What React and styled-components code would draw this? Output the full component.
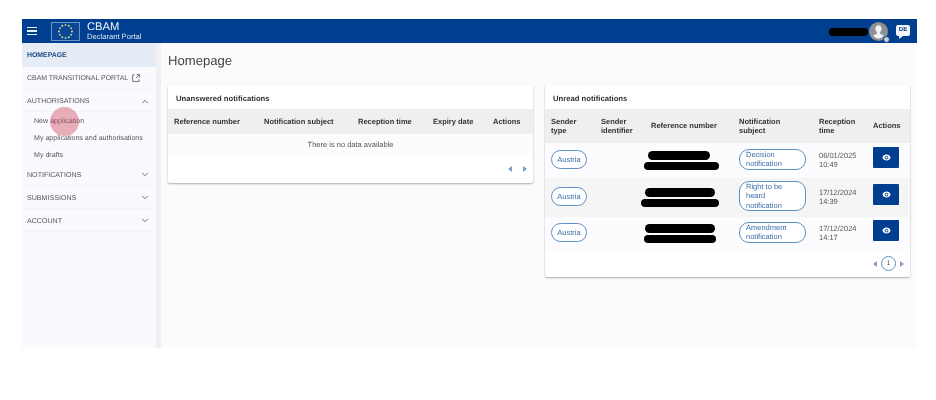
import React from 'react';
import styled, { createGlobalStyle } from 'styled-components';

const GlobalStyle = createGlobalStyle`
  html, body {
    margin: 0;
    padding: 0;
    background: #fff;
    font-family: "Liberation Sans", Arial, sans-serif;
    text-rendering: geometricPrecision;
  }
`;

const blue = '#003f8f';

// page frame
const Frame = styled.div`
  position: relative;
  width: 895px;
  height: 329px;
  margin: 19px 0 0 22px;
  display: flex;
  flex-direction: column;
  background: #fbfbfe;
  overflow: hidden;
  filter: blur(0.35px);
`;

const TopBar = styled.header`
  height: 24px;
  flex: none;
  background: ${blue};
  display: flex;
  align-items: center;
  padding: 0 7px 0 5px;
  color: #fff;
`;

const MenuButton = styled.div`
  width: 10px;
  height: 6px;
  border-top: 1.5px solid #e8eef8;
  border-bottom: 1.5px solid #e8eef8;
  position: relative;
  margin-right: 14px;
  &::after {
    content: '';
    position: absolute;
    left: 0;
    right: 0;
    top: 2.2px;
    height: 1.5px;
    background: #e8eef8;
  }
`;

const Brand = styled.div`
  display: flex;
  flex-direction: column;
  margin-left: 7px;
  margin-top: 1px;
  line-height: 1;
`;

const BrandName = styled.span`
  font-size: 11.2px;
  line-height: 11px;
  color: #f2f5fb;
`;

const BrandSub = styled.span`
  font-size: 7.6px;
  line-height: 8px;
  color: #dfe7f4;
`;

const TopRight = styled.div`
  margin-left: auto;
  display: flex;
  align-items: center;
`;

const HeaderBlot = styled.div`
  width: 39px;
  height: 8px;
  border-radius: 4px;
  background: #000;
  margin-top: 1px;
`;

const Avatar = styled.div`
  position: relative;
  width: 19px;
  height: 19px;
  margin-left: 1px;
  margin-right: 8px;
  svg { display: block; }
`;

const AvatarBadge = styled.span`
  position: absolute;
  right: -2px;
  bottom: -2px;
  width: 5px;
  height: 5px;
  border-radius: 50%;
  background: #c9ced8;
  border: 1px solid ${blue};
`;

const LangBubble = styled.div`
  position: relative;
  width: 14px;
  height: 11px;
  margin-top: -1px;
  background: #f4f7fc;
  border-radius: 2px;
  color: ${blue};
  font-size: 6px;
  font-weight: 700;
  line-height: 11px;
  text-align: center;
  &::after {
    content: '';
    position: absolute;
    left: 3px;
    bottom: -3px;
    border-top: 3px solid #f4f7fc;
    border-right: 4px solid transparent;
  }
`;

const Body = styled.div`
  flex: 1;
  display: flex;
  min-height: 0;
`;

// side menu
const Sidebar = styled.nav`
  width: 134px;
  flex: none;
  background: #fafafe;
  border-right: 5px solid #f0f0f4;
  color: #555;
  font-size: 7.1px;
`;

const HomeItem = styled.div`
  height: 24px;
  background: #e6ecf5;
  color: #1d4a86;
  font-weight: 700;
  font-size: 6.9px;
  padding: 0 5px;
  display: flex;
  align-items: center;
`;

const MenuItem = styled.div`
  height: ${p => p.$h || 23}px;
  padding: 1px 7px 0 5px;
  display: flex;
  align-items: center;
  justify-content: space-between;
  border-bottom: 1px solid #f4f4f8;
  box-sizing: border-box;
  svg { display: block; }
`;

const PortalLabel = styled.span`
  display: flex;
  align-items: center;
  gap: 4px;
  font-size: 6.95px;
  white-space: nowrap;
  margin-bottom: 1px;
`;

const SubList = styled.div`
  display: flex;
  flex-direction: column;
`;

const SubItem = styled.div`
  height: 17px;
  line-height: 19px;
  padding-left: 12px;
  white-space: nowrap;
`;

const Ripple = styled.div`
  position: absolute;
  left: 28px;
  top: 88px;
  width: 29px;
  height: 29px;
  border-radius: 50%;
  background: rgba(205, 70, 90, 0.42);
`;

// content
const Main = styled.main`
  flex: 1;
  padding: 9px 7px 0 7px;
  min-width: 0;
`;

const Title = styled.h1`
  margin: 0 0 16px 0;
  height: 17px;
  font-size: 13.1px;
  line-height: 17px;
  font-weight: 400;
  color: #444;
`;

const Columns = styled.div`
  display: flex;
  align-items: flex-start;
  gap: 12px;
`;

const Card = styled.section`
  width: 365px;
  flex: none;
  background: #fff;
  border-radius: 2px;
  box-shadow: 0 1px 2px rgba(0, 0, 0, 0.32);
`;

const CardTitle = styled.div`
  height: 24px;
  line-height: 27px;
  padding-left: 8px;
  font-size: 7.7px;
  font-weight: 700;
  color: #333;
`;

const HeadRow = styled.div`
  display: grid;
  grid-template-columns: ${p => p.$cols};
  align-items: center;
  height: ${p => p.$h}px;
  padding-left: 6px;
  background: #efefef;
  color: #333;
  font-size: 7.5px;
  font-weight: 700;
  line-height: 9.5px;
`;

const EmptyRow = styled.div`
  height: 21px;
  line-height: 22px;
  text-align: center;
  font-size: 7.5px;
  color: #555;
  background: #fcfcfe;
`;

const DataRow = styled.div`
  display: grid;
  grid-template-columns: ${p => p.$cols};
  align-items: center;
  height: ${p => p.$h}px;
  padding-left: 6px;
  background: ${p => (p.$shaded ? '#f5f5f5' : '#fcfcfe')};
  font-size: 7.5px;
  color: #555;
`;

const CountryPill = styled.span`
  width: 36px;
  height: 19px;
  margin-bottom: 3px;
  box-sizing: border-box;
  border: 1px solid #5f8fc4;
  border-radius: 10px;
  background: #fff;
  color: #3a6ea8;
  line-height: 17px;
  text-align: center;
`;

const SubjectPill = styled.span`
  width: 67px;
  margin-bottom: 3px;
  box-sizing: border-box;
  border: 1px solid #5f8fc4;
  border-radius: 10px;
  background: #fff;
  color: #3a6ea8;
  line-height: 9.5px;
  padding: 0 5px 0 6px;
`;

const Redactions = styled.div`
  display: flex;
  flex-direction: column;
  align-items: flex-start;
  gap: 2px;
`;

const Blot = styled.div`
  height: 8.5px;
  width: ${p => p.$w}px;
  margin-left: ${p => p.$x}px;
  background: #000;
  border-radius: 5px;
`;

const TimeCell = styled.div`
  line-height: 9.5px;
  margin-bottom: 1px;
`;

const ViewButton = styled.button`
  width: 26px;
  height: 21px;
  margin-bottom: 6px;
  padding: 0;
  border: 0;
  border-radius: 1px;
  background: ${blue};
  display: flex;
  align-items: center;
  justify-content: center;
`;

const Pager = styled.div`
  height: ${p => p.$h}px;
  display: flex;
  align-items: center;
  justify-content: flex-end;
  gap: ${p => p.$gap}px;
  padding-right: ${p => p.$pr}px;
`;

const PageNumber = styled.span`
  width: 15px;
  height: 15px;
  box-sizing: border-box;
  border: 1px solid #5f8fc4;
  border-radius: 50%;
  font-size: 6.5px;
  line-height: 13px;
  text-align: center;
  color: #444;
`;

const Arrow = ({ left }) => (
  <svg width="4" height="6" viewBox="0 0 4 6" style={{ display: 'block' }}>
    <path d={left ? 'M4 0v6L0 3z' : 'M0 0v6l4-3z'} fill="#7f9cc4" />
  </svg>
);

const Chevron = ({ up }) => (
  <svg width="8" height="5" viewBox="0 0 9 6" fill="none" stroke="#666" strokeWidth="1.1">
    <path d={up ? 'M1 5l3.5-3.5L8 5' : 'M1 1l3.5 3.5L8 1'} />
  </svg>
);

const ExternalIcon = () => (
  <svg width="8" height="8" viewBox="0 0 8 8" fill="none" stroke="#555" strokeWidth="0.8">
    <path d="M2.6.8H.6v6.6h6.6V5.400M4.600.6h2.800v2.800M7.200.8L4 4" />
  </svg>
);

const EyeIcon = () => (
  <svg width="9" height="7" viewBox="0 0 24 18">
    <path
      fill="#fff"
      d="M12 1C7 1 2.700 4.100 1 9c1.700 4.900 6 8 11 8s9.300-3.100 11-8c-1.700-4.900-6-8-11-8zm0 13a5 5 0 1 1 0-10 5 5 0 0 1 0 10zm0-8a3 3 0 1 0 0 6 3 3 0 0 0 0-6z"
    />
  </svg>
);

// star ring of the EU flag
const EuLogo = () => {
  const stars = Array.from({ length: 12 }, (_, i) => {
    const a = (i * Math.PI) / 6;
    return <circle key={i} cx={14.500 + 6.500 * Math.sin(a)} cy={9.500 - 6.500 * Math.cos(a)} r="1" fill={i % 2 ? '#e9d85f' : '#a9cba4'} />;
  });
  return (
    <svg width="29" height="19" viewBox="0 0 29 19" style={{ display: 'block', flex: 'none' }}>
      <rect x="0.500" y="0.500" width="28" height="18" fill="#0a4596" stroke="#6f93c6" />
      {stars}
    </svg>
  );
};

const UserPicture = () => (
  <svg width="19" height="19" viewBox="0 0 20 20">
    <circle cx="10" cy="10" r="10" fill="#8f8f96" />
    <path fill="#f1f1f3" d="M10 3.500c2 0 3.200 1.600 3.200 3.700 0 1.500-.7 2.900-1.500 3.600v1.600c1.300.6 3 1 3.800 2.200-1.200 1.600-3.300 2.900-5.500 2.900s-4.300-1.300-5.500-2.900c.8-1.200 2.500-1.600 3.800-2.200v-1.600c-.8-.7-1.500-2.100-1.500-3.600 0-2.100 1.200-3.700 3.200-3.700z" />
  </svg>
);

const leftCols = '90px 94px 75px 60px 1fr';
const rightCols = '50px 50px 88px 80px 54px 1fr';

const rows = [
  { h: 35, subject: ['Decision', 'notification'], date: '06/01/2025', time: '10:49', blots: [[62, -3], [75, -7]] },
  { h: 39, shaded: true, subject: ['Right to be', 'heard', 'notification'], date: '17/12/2024', time: '14:39', blots: [[70, -6], [78, -10]] },
  { h: 33, subject: ['Amendment', 'notification'], date: '17/12/2024', time: '14:17', blots: [[70, -6], [72, -7]] },
];

const App = () => (
  <>
    <GlobalStyle />
    <Frame>
      <TopBar>
        <MenuButton />
        <EuLogo />
        <Brand>
          <BrandName>CBAM</BrandName>
          <BrandSub>Declarant Portal</BrandSub>
        </Brand>
        <TopRight>
          <HeaderBlot />
          <Avatar>
            <UserPicture />
            <AvatarBadge />
          </Avatar>
          <LangBubble>DE</LangBubble>
        </TopRight>
      </TopBar>
      <Body>
        <Sidebar>
          <HomeItem>HOMEPAGE</HomeItem>
          <MenuItem>
            <PortalLabel>CBAM TRANSITIONAL PORTAL <ExternalIcon /></PortalLabel>
          </MenuItem>
          <MenuItem $h={22}>AUTHORISATIONS <Chevron up /></MenuItem>
          <SubList>
            <SubItem>New application</SubItem>
            <SubItem>My applications and authorisations</SubItem>
            <SubItem>My drafts</SubItem>
          </SubList>
          <MenuItem>NOTIFICATIONS <Chevron /></MenuItem>
          <MenuItem>SUBMISSIONS <Chevron /></MenuItem>
          <MenuItem>ACCOUNT <Chevron /></MenuItem>
        </Sidebar>
        <Main>
          <Title>Homepage</Title>
          <Columns>
            <Card>
              <CardTitle>Unanswered notifications</CardTitle>
              <HeadRow $cols={leftCols} $h={25}>
                <span>Reference number</span>
                <span>Notification subject</span>
                <span>Reception time</span>
                <span>Expiry date</span>
                <span>Actions</span>
              </HeadRow>
              <EmptyRow>There is no data available</EmptyRow>
              <Pager $h={28} $gap={11} $pr={6}>
                <Arrow left />
                <Arrow />
              </Pager>
            </Card>
            <Card>
              <CardTitle>Unread notifications</CardTitle>
              <HeadRow $cols={rightCols} $h={34}>
                <span>Sender<br />type</span>
                <span>Sender<br />identifier</span>
                <span>Reference number</span>
                <span>Notification<br />subject</span>
                <span>Reception<br />time</span>
                <span>Actions</span>
              </HeadRow>
              {rows.map(row => (
                <DataRow key={row.time} $cols={rightCols} $h={row.h} $shaded={row.shaded}>
                  <CountryPill>Austria</CountryPill>
                  <span />
                  <Redactions>
                    {row.blots.map(([w, x]) => <Blot key={w} $w={w} $x={x} />)}
                  </Redactions>
                  <SubjectPill>
                    {row.subject.map((s, i) => <React.Fragment key={s}>{i > 0 && <br />}{s}</React.Fragment>)}
                  </SubjectPill>
                  <TimeCell>{row.date}<br />{row.time}</TimeCell>
                  <ViewButton aria-label="View"><EyeIcon /></ViewButton>
                </DataRow>
              ))}
              <Pager $h={27} $gap={4} $pr={6}>
                <Arrow left />
                <PageNumber>1</PageNumber>
                <Arrow />
              </Pager>
            </Card>
          </Columns>
        </Main>
      </Body>
      <Ripple />
    </Frame>
  </>
);

export default App;
